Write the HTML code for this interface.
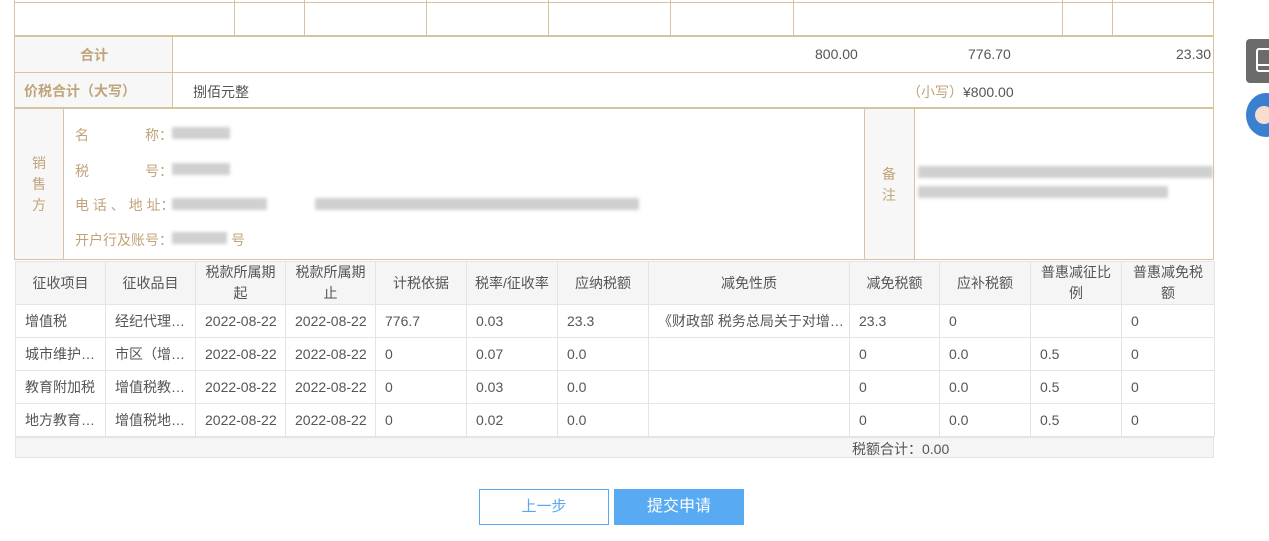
<!DOCTYPE html>
<html><head><meta charset="utf-8"><style>
*{margin:0;padding:0;box-sizing:border-box}
body{width:1269px;height:541px;background:#fff;position:relative;overflow:hidden;font-family:"Liberation Sans","Noto Sans CJK SC",sans-serif;font-size:14px;color:#555}
.a{position:absolute}
.vl{position:absolute;width:1px;background:#d6c3a0}
.hl{position:absolute;height:1px;background:#d6c3a0}
.lbl{color:#c0a47a}
.bar{position:absolute;background:#d0d0d0;height:12px;filter:blur(1.5px)}
table{position:absolute;left:15px;top:261px;width:1199px;border-collapse:collapse;table-layout:fixed}
td,th{border:1px solid #e4e4e4;font-weight:normal;font-size:14px;color:#555;height:33px;padding:0 1px 0 9px;white-space:nowrap;overflow:hidden;text-overflow:ellipsis}
th{background:#f5f5f5;height:43px;text-align:center;white-space:normal;line-height:21px;padding:0 9px}
th.n{white-space:nowrap;padding:0}
</style></head><body>
<div class="a" style="left:14px;top:0;width:1200px;height:260px;border-left:1px solid #d6c3a0;border-right:1px solid #d6c3a0;border-bottom:1px solid #d6c3a0"></div>
<div class="vl" style="left:234px;top:0;height:36px"></div>
<div class="vl" style="left:304px;top:0;height:36px"></div>
<div class="vl" style="left:426px;top:0;height:36px"></div>
<div class="vl" style="left:548px;top:0;height:36px"></div>
<div class="vl" style="left:670px;top:0;height:36px"></div>
<div class="vl" style="left:793px;top:0;height:36px"></div>
<div class="vl" style="left:1062px;top:0;height:36px"></div>
<div class="vl" style="left:1112px;top:0;height:36px"></div>
<div class="hl" style="left:14px;top:2px;width:1200px"></div>
<div class="hl" style="left:14px;top:35px;width:1200px;height:2px"></div>
<div class="a" style="left:15px;top:37px;width:157px;height:71px;background:#f7f7f7"></div>
<div class="vl" style="left:172px;top:36px;height:72px"></div>
<div class="hl" style="left:14px;top:72px;width:1200px"></div>
<div class="hl" style="left:14px;top:107px;width:1200px;height:2px"></div>
<div class="a lbl" style="left:80px;top:45px;font-weight:bold">合计</div>
<div class="a" style="left:815px;top:46px">800.00</div>
<div class="a" style="left:968px;top:46px">776.70</div>
<div class="a" style="left:1176px;top:46px">23.30</div>
<div class="a lbl" style="left:24px;top:81px;font-weight:bold">价税合计（大写）</div>
<div class="a" style="left:193px;top:82px">捌佰元整</div>
<div class="a" style="left:907px;top:82px"><span class="lbl">（小写）</span>¥800.00</div>
<div class="a" style="left:15px;top:109px;width:48px;height:150px;background:#f7f7f7"></div>
<div class="vl" style="left:63px;top:109px;height:151px"></div>
<div class="a lbl" style="left:32px;top:153px;line-height:21px;width:14px">销<br>售<br>方</div>
<div class="a lbl" style="left:75px;top:125px">名<span style="margin-left:56px">称：</span></div>
<div class="a lbl" style="left:75px;top:161px">税<span style="margin-left:56px">号：</span></div>
<div class="a lbl" style="left:75px;top:195px">电 话 、 地 址：</div>
<div class="a lbl" style="left:75px;top:230px">开户行及账号：<span style="margin-left:58px">号</span></div>
<div class="bar" style="left:172px;top:127px;width:58px"></div>
<div class="bar" style="left:172px;top:163px;width:58px"></div>
<div class="bar" style="left:172px;top:198px;width:95px"></div>
<div class="bar" style="left:315px;top:198px;width:324px"></div>
<div class="bar" style="left:172px;top:232px;width:55px"></div>
<div class="a" style="left:865px;top:109px;width:49px;height:150px;background:#f7f7f7"></div>
<div class="vl" style="left:864px;top:109px;height:151px"></div>
<div class="vl" style="left:914px;top:109px;height:151px"></div>
<div class="a lbl" style="left:882px;top:164px;line-height:21px;width:14px">备<br>注</div>
<div class="bar" style="left:918px;top:166px;width:295px"></div>
<div class="bar" style="left:918px;top:186px;width:250px"></div>
<table>
<colgroup><col style="width:90px"><col style="width:90px"><col style="width:90px"><col style="width:90px"><col style="width:91px"><col style="width:91px"><col style="width:91px"><col style="width:201px"><col style="width:90px"><col style="width:91px"><col style="width:91px"><col style="width:93px"></colgroup>
<tr><th>征收项目</th><th>征收品目</th><th>税款所属期起</th><th>税款所属期止</th><th>计税依据</th><th class="n">税率/征收率</th><th>应纳税额</th><th>减免性质</th><th>减免税额</th><th>应补税额</th><th>普惠减征比例</th><th>普惠减免税额</th></tr>
<tr><td>增值税</td><td>经纪代理服务</td><td>2022-08-22</td><td>2022-08-22</td><td>776.7</td><td>0.03</td><td>23.3</td><td>《财政部 税务总局关于对增值税小规模纳税人</td><td>23.3</td><td>0</td><td></td><td>0</td></tr>
<tr><td>城市维护建设税</td><td>市区（增值税附征）</td><td>2022-08-22</td><td>2022-08-22</td><td>0</td><td>0.07</td><td>0.0</td><td></td><td>0</td><td>0.0</td><td>0.5</td><td>0</td></tr>
<tr><td>教育附加税</td><td>增值税教育费附加</td><td>2022-08-22</td><td>2022-08-22</td><td>0</td><td>0.03</td><td>0.0</td><td></td><td>0</td><td>0.0</td><td>0.5</td><td>0</td></tr>
<tr><td>地方教育附加</td><td>增值税地方教育附加</td><td>2022-08-22</td><td>2022-08-22</td><td>0</td><td>0.02</td><td>0.0</td><td></td><td>0</td><td>0.0</td><td>0.5</td><td>0</td></tr>
</table>
<div class="a" style="left:15px;top:436px;width:1199px;height:22px;background:#f5f5f5;border:1px solid #e4e4e4;border-top:2px solid #e4e4e4"></div>
<div class="a" style="left:852px;top:439px">税额合计：0.00</div>
<div class="a" style="left:479px;top:489px;width:130px;height:36px;border:1px solid #5aa9ee;color:#5aa9ee;text-align:center;line-height:34px;font-size:15px">上一步</div>
<div class="a" style="left:614px;top:489px;width:130px;height:36px;background:#58aaf2;color:#fff;text-align:center;line-height:36px;font-size:16px">提交申请</div>
<div class="a" style="left:1246px;top:39px;width:30px;height:44px;background:#6b6b6b;border-radius:4px"></div>
<div class="a" style="left:1256px;top:48px;width:20px;height:24px;border:2px solid #fff;border-radius:3px"></div>
<div class="a" style="left:1256px;top:64px;width:20px;height:2px;background:#fff"></div>
<div class="a" style="left:1246px;top:93px;width:40px;height:44px;background:#3a7fd0;border-radius:50%"></div>
<div class="a" style="left:1255px;top:106px;width:18px;height:18px;background:#f6ddd0;border-radius:50%"></div>
</body></html>
